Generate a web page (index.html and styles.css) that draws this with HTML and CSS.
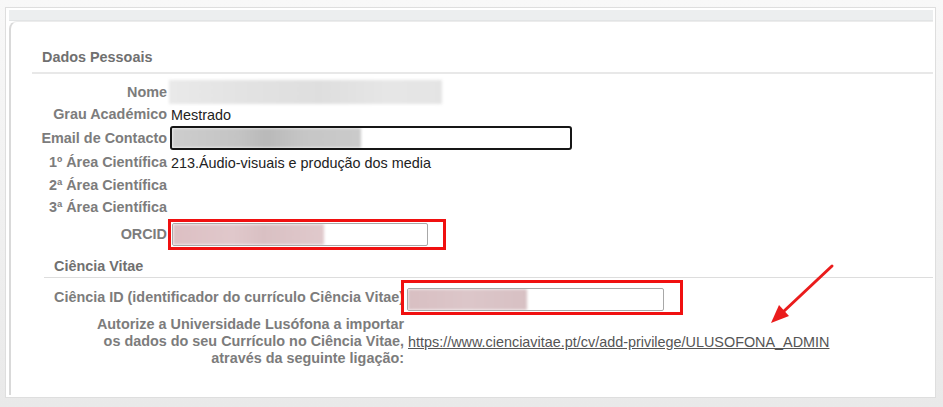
FILE: index.html
```html
<!DOCTYPE html>
<html lang="pt">
  <head>
    <meta charset="UTF-8" />
    <meta name="viewport" content="width=device-width, initial-scale=1.0" />
    <title>Dados Pessoais</title>
    <link rel="stylesheet" href="styles.css">
  </head>
  <body>
    <div class="panel">
      <div class="band"></div>
      <div class="card">
        <section class="group">
          <h2 class="group-title">Dados Pessoais</h2>
          <div class="row row-name">
            <span class="label">Nome</span>
            <span class="smudge smudge-name"></span>
          </div>
          <div class="row row-grau">
            <span class="label">Grau Académico</span>
            <span class="value">Mestrado</span>
          </div>
          <div class="row row-email">
            <span class="label">Email de Contacto</span>
            <div class="field field-email"><span class="smudge smudge-email"></span></div>
          </div>
          <div class="row row-area1">
            <span class="label">1º Área Científica</span>
            <span class="value">213.Áudio-visuais e produção dos media</span>
          </div>
          <div class="row">
            <span class="label">2ª Área Científica</span>
          </div>
          <div class="row">
            <span class="label">3ª Área Científica</span>
          </div>
          <div class="row row-orcid">
            <span class="label">ORCID</span>
            <div class="mark mark-orcid">
              <div class="field field-orcid"><span class="smudge smudge-orcid"></span></div>
            </div>
          </div>
        </section>

        <section class="group group-cv">
          <h2 class="group-title">Ciência Vitae</h2>
          <div class="row row-cvid">
            <span class="label">Ciência ID (identificador do currículo Ciência Vitae)</span>
            <div class="mark mark-cvid">
              <div class="field field-cvid"><span class="smudge smudge-cvid"></span></div>
            </div>
          </div>
          <div class="row row-link">
            <span class="label">Autorize a Universidade Lusófona a importar<br>os dados do seu Currículo no Ciência Vitae,<br>através da seguinte ligação:</span>
            <a class="link" href="#">https://www.cienciavitae.pt/cv/add-privilege/ULUSOFONA_ADMIN</a>
          </div>
        </section>

        <svg class="arrow" width="90" height="80" viewBox="0 0 90 80">
          <line x1="72" y1="11" x2="23" y2="57" stroke="#ea1c1c" stroke-width="3" stroke-linecap="round" />
          <polygon points="11,68 29,61 19,50" fill="#ea1c1c" />
        </svg>
      </div>
    </div>
  </body>
</html>
```

FILE: styles.css
```css
* {
  box-sizing: border-box;
}

body {
  margin: 0;
  height: 407px;
  overflow: hidden;
  font-family: "Liberation Sans", Arial, sans-serif;
  font-size: 14.4px;
  background: linear-gradient(to bottom, #f8f8f8, #e9e9e9);
}

.panel {
  margin: 7px 0 0 5px;
  width: 931px;
  height: 391px;
  padding: 2px 2px 0 3px;
  background: #fff;
  border: 1px solid #dedede;
}

.band {
  height: 11px;
  width: 924px;
  background: #eceeef;
  border-bottom: 1px solid #e2e4e5;
}

.card {
  position: relative;
  width: 924px;
  height: 374px;
  padding-left: 21px;
  border-left: 2px solid #d9d9d9;
  border-top: 1px solid #ececec;
  border-top-left-radius: 8px;
}

.group-title {
  margin: 0;
  padding: 28px 10px 7px;
  font-size: 14.4px;
  line-height: 15px;
  font-weight: bold;
  color: #707070;
  border-bottom: 2px solid #e8e8e8;
}

.row-name {
  margin-top: 6px;
}

.row {
  display: flex;
  align-items: center;
  height: 22px;
  gap: 4px;
}

.label {
  flex: 0 0 135px;
  text-align: right;
  font-weight: bold;
  color: #7c7c7c;
  line-height: 17px;
  white-space: nowrap;
}

.value {
  color: #222;
}

.row.row-name {
  height: 24px;
}

.row-grau {
  height: 21px;
}

.row-email {
  height: 26px;
}

.row-area1 {
  height: 23px;
}

.row-orcid {
  height: 31px;
  margin-top: 1px;
}

.field {
  height: 23px;
  background: #fff;
  border: 1px solid #a8a8a8;
  border-radius: 2px;
  overflow: hidden;
}

.field-email {
  width: 402px;
  height: 24px;
  margin-left: -1px;
  border: 2px solid #161616;
  border-radius: 3px;
}

.field-orcid {
  width: 256px;
}

.field-cvid {
  width: 257px;
}

.mark {
  border: 3px solid #f01010;
}

.mark-orcid {
  margin-left: -3px;
  padding: 1px 15px 1px 1px;
}

.mark-cvid {
  margin-left: -6px;
  padding: 5px 16px 1px 3px;
}

.smudge {
  display: block;
  height: 100%;
  filter: blur(1.5px);
}

.smudge-name {
  width: 273px;
  margin-left: -2px;
  background: linear-gradient(90deg, #e9e9e9, #e2e2e2 30%, #dedede 55%, #e6e6e6 80%, #e4e4e4);
}

.smudge-email {
  width: 189px;
  background: linear-gradient(90deg, #cdcdcd, #c4c4c4 35%, #b9b9b9 50%, #c6c6c6 70%, #cacaca);
}

.smudge-orcid {
  width: 151px;
  background: linear-gradient(90deg, #dcbfc3, #e0c8cb 40%, #d9c0c3 60%, #e0c9cc);
}

.smudge-cvid {
  width: 119px;
  background: linear-gradient(90deg, #d8bfc2, #dcc6c9 50%, #d7c0c3);
}

.group-cv {
  margin-left: 12px;
}

.group-cv .group-title {
  margin-top: 9px;
  padding: 0 10px 3px;
  border-bottom: 1px solid #dddddd;
}

.group-cv .label {
  flex-basis: 360px;
}

.row-cvid {
  height: 38px;
  gap: 3px;
}

.row-link {
  height: 51px;
  gap: 4px;
}

.link {
  color: #555;
  text-decoration: underline;
}

.arrow {
  position: absolute;
  left: 749px;
  top: 233px;
}
```
